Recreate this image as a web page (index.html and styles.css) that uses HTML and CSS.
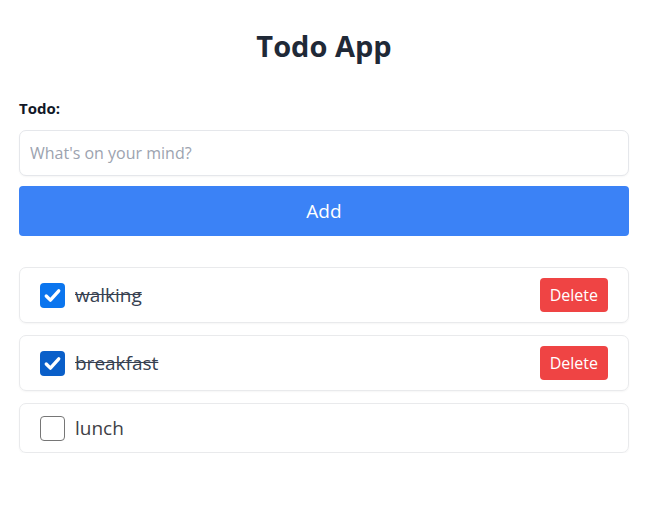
FILE: index.html
```html
<!DOCTYPE html>
<html lang="en">
<head>
<meta charset="utf-8">
<title>Todo App</title>
<link rel="stylesheet" href="styles.css">
</head>
<body>
<main class="app">
  <h1 class="title">Todo App</h1>
  <form class="form">
    <label class="label" for="todo">Todo:</label>
    <input class="input" id="todo" type="text" placeholder="What's on your mind?">
    <button class="add" type="button">Add</button>
  </form>
  <ul class="list">
    <li class="item">
      <span class="check checked"><svg viewBox="0 0 24 24" width="25" height="25"><path d="M6 12.5l4 4 8-9" fill="none" stroke="#fff" stroke-width="3.2" stroke-linecap="round" stroke-linejoin="round"/></svg></span>
      <span class="text done">walking</span>
      <button class="delete" type="button">Delete</button>
    </li>
    <li class="item">
      <span class="check checked dark"><svg viewBox="0 0 24 24" width="25" height="25"><path d="M6 12.5l4 4 8-9" fill="none" stroke="#fff" stroke-width="3.2" stroke-linecap="round" stroke-linejoin="round"/></svg></span>
      <span class="text done">breakfast</span>
      <button class="delete" type="button">Delete</button>
    </li>
    <li class="item">
      <span class="check"></span>
      <span class="text">lunch</span>
    </li>
  </ul>
</main>
</body>
</html>
```

FILE: styles.css
```css
* { box-sizing: border-box; }
body {
  margin: 0;
  background: #fff;
  font-family: "Open Sans", "Noto Sans", sans-serif;
  color: #1f2937;
}
.app {
  padding: 26px 17px 0 19px;
}
.title {
  margin: 0 0 32px;
  text-align: center;
  font-size: 29px;
  line-height: 40px;
  font-weight: 700;
  color: #1f2937;
}
.form {
  display: flex;
  flex-direction: column;
}
.label {
  font-size: 15px;
  font-weight: 700;
  line-height: 20px;
  margin-bottom: 12px;
  color: #111827;
}
.input {
  height: 46px;
  border: 1px solid #e5e7eb;
  border-radius: 7px;
  padding: 0 10px;
  font-family: inherit;
  font-size: 16px;
  color: #374151;
  outline: none;
  box-shadow: 0 1px 2px rgba(0,0,0,0.04);
}
.input::placeholder { color: #9ca3af; }
.add {
  margin-top: 10px;
  height: 50px;
  border: 0;
  border-radius: 4px;
  background: #3b82f6;
  color: #fff;
  font-family: inherit;
  font-size: 19px;
}
.list {
  list-style: none;
  margin: 31px 0 0;
  padding: 0;
  display: flex;
  flex-direction: column;
  gap: 12px;
}
.item {
  display: flex;
  align-items: center;
  min-height: 50px;
  padding: 10px 20px;
  border: 1px solid #e9eaec;
  border-radius: 7px;
  box-shadow: 0 1px 2px rgba(0,0,0,0.04);
}
.check {
  width: 25px;
  height: 25px;
  flex: none;
  border: 1.5px solid #767676;
  border-radius: 4px;
  background: #fff;
  display: flex;
}
.check.checked {
  border: 0;
  background: #0b75ee;
}
.check.checked.dark { background: #0a5fc9; }
.text {
  margin-left: 10px;
  font-size: 19px;
  line-height: 28px;
  color: #3f3f46;
  flex: 1;
}
.text.done {
  text-decoration: line-through;
  color: #374151;
}
.delete {
  height: 34px;
  padding: 0 10px;
  border: 0;
  border-radius: 4px;
  background: #ef4444;
  color: #fff;
  font-family: inherit;
  font-size: 16px;
}
```
